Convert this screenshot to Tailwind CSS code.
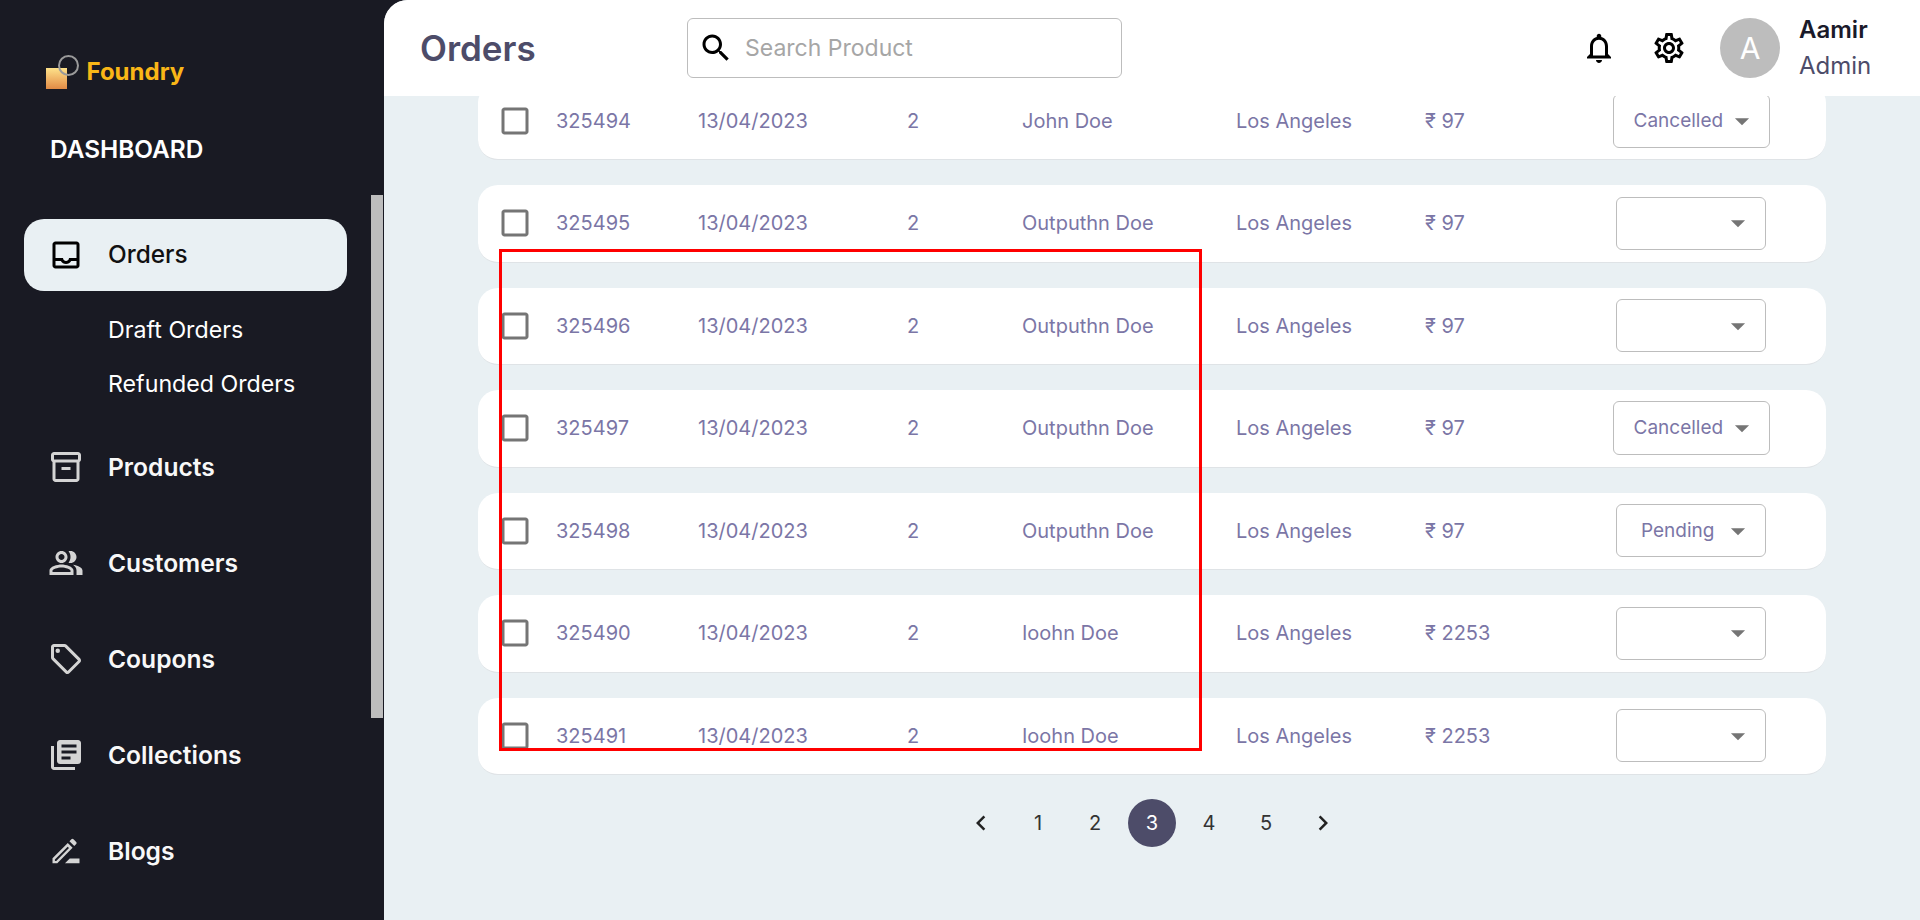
<!DOCTYPE html>
<html lang="en">
<head>
  <meta charset="UTF-8" />
  <title>Foundry - Orders</title>
  <script src="https://cdn.jsdelivr.net/npm/@tailwindcss/browser@4"></script>
</head>
<body class="h-screen overflow-hidden bg-[#191a23] [font-family:Inter,sans-serif]">
<div class="flex h-[920px] relative">

  <!-- sidebar -->
  <aside class="w-[384px] shrink-0 text-white">
    <div class="flex items-center h-[48px] mt-[48px] pl-[46px]">
      <span class="relative block w-[41px] h-[36px] mt-[2px]">
        <span class="absolute left-0 top-[13px] w-[21px] h-[21px] bg-gradient-to-b from-[#fde28a] to-[#e08a45]"></span>
        <span class="absolute left-[12px] top-0 w-[21px] h-[21px] rounded-full border-2 border-[#9a9a9a]"></span>
      </span>
      <span class="text-[24px] font-bold text-[#f9b617] -ml-[0.5px]">Foundry</span>
    </div>
    <div class="pl-[50px] mt-[38px] text-[24.4px] leading-[30px] font-semibold">DASHBOARD</div>

    <a class="flex items-center mt-[55px] ml-[24px] w-[323px] h-[72px] pl-[25px] rounded-[20px] bg-[#e9f0f3] text-[#111] text-[24.4px] font-medium">
      <svg class="w-[36px] h-[36px] fill-black -ml-[1px]" viewBox="0 0 24 24"><path d="M19 3H5c-1.1 0-2 .9-2 2v14c0 1.1.9 2 2 2h14c1.1 0 2-.9 2-2V5c0-1.1-.9-2-2-2zm0 16H5v-3h3.56c.69 1.19 1.97 2 3.45 2s2.75-.81 3.45-2H19v3zm0-5h-4.99c0 1.1-.9 2-2 2s-2-.9-2-2H5V5h14v9z"/></svg>
      <span class="ml-[24px] pb-[2px]">Orders</span>
    </a>
    <div class="pl-[108px] mt-[12px] text-[23.2px] leading-[54px] text-white">
      <div>Draft Orders</div>
      <div>Refunded Orders</div>
    </div>

    <nav class="mt-[32px] flex flex-col gap-[48px] pl-[48px] text-[24.6px] leading-[48px] font-semibold text-[#f8f8f8]">
      <a class="flex items-center h-[48px]">
        <svg class="w-[36px] h-[36px] fill-[#d4d4d4]" viewBox="0 0 24 24"><path d="M20 2H4c-1 0-2 .9-2 2v3.01c0 .72.43 1.34 1 1.69V20c0 1.1 1.1 2 2 2h14c.9 0 2-.9 2-2V8.7c.57-.35 1-.97 1-1.69V4c0-1.1-1-2-2-2zm-1 18H5V9h14v11zm1-13H4V4h16v3zM9 12h6v2H9z"/></svg>
        <span class="ml-[24px]">Products</span>
      </a>
      <a class="flex items-center h-[48px]">
        <svg class="w-[36px] h-[36px] fill-[#d4d4d4]" viewBox="0 0 24 24"><path d="M16.67 13.13C18.04 14.06 19 15.32 19 17v3h4v-3c0-2.18-3.57-3.47-6.33-3.87zM15 12c2.21 0 4-1.79 4-4s-1.79-4-4-4c-.47 0-.91.1-1.33.24C14.5 5.27 15 6.58 15 8s-.5 2.73-1.33 3.76c.42.14.86.24 1.33.24zM9 12c2.21 0 4-1.79 4-4s-1.79-4-4-4-4 1.79-4 4 1.79 4 4 4zm0-6c1.1 0 2 .9 2 2s-.9 2-2 2-2-.9-2-2 .9-2 2-2zM9 13c-2.67 0-8 1.34-8 4v3h16v-3c0-2.66-5.33-4-8-4zm6 5H3v-.99C3.2 16.29 6.3 15 9 15s5.8 1.29 6 2v1z"/></svg>
        <span class="ml-[24px]">Customers</span>
      </a>
      <a class="flex items-center h-[48px]">
        <svg class="w-[36px] h-[36px] fill-[#d4d4d4]" viewBox="0 0 24 24"><path d="M21.41 11.58l-9-9C12.05 2.22 11.55 2 11 2H4c-1.1 0-2 .9-2 2v7c0 .55.22 1.05.59 1.42l9 9c.36.36.86.58 1.41.58s1.05-.22 1.41-.59l7-7c.37-.36.59-.86.59-1.41s-.23-1.06-.59-1.42zM13 20.01 4 11V4h7v-.01l9 9-7 7.02z"/><circle cx="6.5" cy="6.5" r="1.5"/></svg>
        <span class="ml-[24px]">Coupons</span>
      </a>
      <a class="flex items-center h-[48px]">
        <svg class="w-[36px] h-[36px] fill-[#d4d4d4]" viewBox="0 0 24 24"><path d="M4 6H2v14c0 1.1.9 2 2 2h14v-2H4V6zm16-4H8c-1.1 0-2 .9-2 2v12c0 1.1.9 2 2 2h12c1.1 0 2-.9 2-2V4c0-1.1-.9-2-2-2zm-1 9H9V9h10v2zm-4 4H9v-2h6v2zm4-8H9V5h10v2z"/></svg>
        <span class="ml-[24px]">Collections</span>
      </a>
      <a class="flex items-center h-[48px]">
        <svg class="w-[36px] h-[36px] fill-[#d4d4d4]" viewBox="0 0 24 24"><path fill-rule="evenodd" d="M3 20.2v-3.4L13.2 6.6l3.2 3.2L6.2 20.2zM4.6 18.6h.9L14 10l-.9-.9-8.5 8.5zM14.3 5.5l1.3-1.3a1 1 0 0 1 1.4 0l1.8 1.8a1 1 0 0 1 0 1.4l-1.3 1.3zM11.3 20.2l3.2-3.2H21v3.2z"/></svg>
        <span class="ml-[24px]">Blogs</span>
      </a>
    </nav>
  </aside>

  <!-- sidebar scrollbar thumb -->
  <div class="absolute left-[371px] top-[195px] w-[12px] h-[523px] bg-[#bdbdbd]"></div>

  <!-- main -->
  <main class="flex-1 flex flex-col bg-[#e9f0f3] rounded-tl-3xl overflow-hidden">
    <header class="relative z-10 h-[96px] shrink-0 bg-white flex items-center pl-[36px]">
      <h1 class="w-[267px] text-[35px] font-semibold text-[#4d4c69]">Orders</h1>
      <div class="flex items-center w-[435px] h-[60px] pl-[10px] border border-[#bdbdbd] rounded-[6px]">
        <svg class="w-[36px] h-[36px] fill-black" viewBox="0 0 24 24"><path d="M15.5 14h-.79l-.28-.27C15.41 12.59 16 11.11 16 9.5 16 5.91 13.09 3 9.5 3S3 5.91 3 9.5 5.91 16 9.5 16c1.61 0 3.09-.59 4.23-1.57l.27.28v.79l5 4.99L20.49 19l-4.99-5zm-6 0C7.01 14 5 11.99 5 9.5S7.01 5 9.5 5 14 7.01 14 9.5 11.99 14 9.5 14z"/></svg>
        <span class="ml-[11px] text-[23px] text-[#a6a6a6]">Search Product</span>
      </div>
      <svg class="ml-[459px] w-[36px] h-[36px] fill-black" viewBox="0 0 24 24"><path d="M12 22c1.1 0 2-.9 2-2h-4c0 1.1.9 2 2 2zm6-6v-5c0-3.07-1.63-5.64-4.5-6.32V4c0-.83-.67-1.5-1.5-1.5s-1.5.67-1.5 1.5v.68C7.64 5.36 6 7.92 6 11v5l-2 2v1h16v-1l-2-2zm-2 1H8v-6c0-2.48 1.51-4.5 4-4.5s4 2.02 4 4.5v6z"/></svg>
      <svg class="ml-[34px] w-[36px] h-[36px] fill-black" viewBox="0 0 24 24"><path d="M19.43 12.98c.04-.32.07-.64.07-.98 0-.34-.03-.66-.07-.98l2.11-1.65c.19-.15.24-.42.12-.64l-2-3.46c-.09-.16-.26-.25-.44-.25-.06 0-.12.01-.17.03l-2.49 1c-.52-.4-1.08-.73-1.69-.98l-.38-2.65C14.46 2.18 14.25 2 14 2h-4c-.25 0-.46.18-.49.42l-.38 2.65c-.61.25-1.17.59-1.69.98l-2.49-1c-.06-.02-.12-.03-.18-.03-.17 0-.34.09-.43.25l-2 3.46c-.13.22-.07.49.12.64l2.11 1.65c-.04.32-.07.65-.07.98 0 .33.03.66.07.98l-2.11 1.65c-.19.15-.24.42-.12.64l2 3.46c.09.16.26.25.44.25.06 0 .12-.01.17-.03l2.49-1c.52.4 1.08.73 1.69.98l.38 2.65c.03.24.24.42.49.42h4c.25 0 .46-.18.49-.42l.38-2.65c.61-.25 1.17-.59 1.69-.98l2.49 1c.06.02.12.03.18.03.17 0 .34-.09.43-.25l2-3.46c.12-.22.07-.49-.12-.64l-2.11-1.65zm-1.98-1.71c.04.31.05.52.05.73 0 .21-.02.43-.05.73l-.14 1.13.89.7 1.08.84-.7 1.21-1.27-.51-1.04-.42-.9.68c-.43.32-.84.56-1.25.73l-1.06.43-.16 1.13-.2 1.35h-1.4l-.19-1.35-.16-1.13-1.06-.43c-.43-.18-.83-.41-1.23-.71l-.91-.7-1.06.43-1.27.51-.7-1.21 1.08-.84.89-.7-.14-1.13c-.03-.31-.05-.54-.05-.74s.02-.43.05-.73l.14-1.13-.89-.7-1.08-.84.7-1.21 1.27.51 1.04.42.9-.68c.43-.32.84-.56 1.25-.73l1.06-.43.16-1.13.2-1.35h1.39l.19 1.35.16 1.13 1.06.43c.43.18.83.41 1.23.71l.91.7 1.06-.43 1.27-.51.7 1.21-1.07.85-.89.7.14 1.13zM12 8c-2.21 0-4 1.79-4 4s1.79 4 4 4 4-1.79 4-4-1.79-4-4-4zm0 6c-1.1 0-2-.9-2-2s.9-2 2-2 2 .9 2 2-.9 2-2 2z"/></svg>
      <div class="ml-[33px] w-[60px] h-[60px] rounded-full bg-[#bdbdbd] flex items-center justify-center text-white text-[30px]">A</div>
      <div class="ml-[19px] text-[24px] leading-[36px]">
        <div class="font-semibold text-[#1a1a2a]">Aamir</div>
        <div class="text-[#4d4c69]">Admin</div>
      </div>
    </header>

    <section class="-mt-[13.5px] pl-[94px] w-[1442px] flex flex-col gap-[25px] text-[20px] text-[#7b76a6]">
      <!-- rows -->
      <div class="flex items-center h-[77.5px] pl-[19px] bg-white rounded-[20px] border-b border-[#dfe3e6]">
        <svg class="w-[36px] h-[36px] fill-[#757575]" viewBox="0 0 24 24"><path d="M19 5v14H5V5h14m0-2H5c-1.1 0-2 .9-2 2v14c0 1.1.9 2 2 2h14c1.1 0 2-.9 2-2V5c0-1.1-.9-2-2-2z"/></svg>
        <span class="ml-[23px] w-[142px]">325494</span><span class="w-[209px]">13/04/2023</span><span class="w-[115px]">2</span><span class="w-[214px]">John Doe</span><span class="w-[189px]">Los Angeles</span><span class="w-[150px]">₹ 97</span>
        <div class="w-[232px] flex justify-center">
          <div class="flex items-center justify-between w-[157px] h-[54px] pl-[20px] pr-[14px] border border-[#bdbdbd] rounded-[6px] text-[19px]">Cancelled<svg class="w-[34px] h-[34px] -mr-[4px] fill-[#757575]" viewBox="0 0 24 24"><path d="M7 10l5 5 5-5z"/></svg></div>
        </div>
      </div>
      <div class="flex items-center h-[77.5px] pl-[19px] bg-white rounded-[20px] border-b border-[#dfe3e6]">
        <svg class="w-[36px] h-[36px] fill-[#757575]" viewBox="0 0 24 24"><path d="M19 5v14H5V5h14m0-2H5c-1.1 0-2 .9-2 2v14c0 1.1.9 2 2 2h14c1.1 0 2-.9 2-2V5c0-1.1-.9-2-2-2z"/></svg>
        <span class="ml-[23px] w-[142px]">325495</span><span class="w-[209px]">13/04/2023</span><span class="w-[115px]">2</span><span class="w-[214px]">Outputhn Doe</span><span class="w-[189px]">Los Angeles</span><span class="w-[150px]">₹ 97</span>
        <div class="w-[232px] flex justify-center">
          <div class="flex items-center justify-end w-[150px] h-[53px] pr-[10px] border border-[#bdbdbd] rounded-[6px]"><svg class="w-[34px] h-[34px] fill-[#757575]" viewBox="0 0 24 24"><path d="M7 10l5 5 5-5z"/></svg></div>
        </div>
      </div>
      <div class="flex items-center h-[77.5px] pl-[19px] bg-white rounded-[20px] border-b border-[#dfe3e6]">
        <svg class="w-[36px] h-[36px] fill-[#757575]" viewBox="0 0 24 24"><path d="M19 5v14H5V5h14m0-2H5c-1.1 0-2 .9-2 2v14c0 1.1.9 2 2 2h14c1.1 0 2-.9 2-2V5c0-1.1-.9-2-2-2z"/></svg>
        <span class="ml-[23px] w-[142px]">325496</span><span class="w-[209px]">13/04/2023</span><span class="w-[115px]">2</span><span class="w-[214px]">Outputhn Doe</span><span class="w-[189px]">Los Angeles</span><span class="w-[150px]">₹ 97</span>
        <div class="w-[232px] flex justify-center">
          <div class="flex items-center justify-end w-[150px] h-[53px] pr-[10px] border border-[#bdbdbd] rounded-[6px]"><svg class="w-[34px] h-[34px] fill-[#757575]" viewBox="0 0 24 24"><path d="M7 10l5 5 5-5z"/></svg></div>
        </div>
      </div>
      <div class="flex items-center h-[77.5px] pl-[19px] bg-white rounded-[20px] border-b border-[#dfe3e6]">
        <svg class="w-[36px] h-[36px] fill-[#757575]" viewBox="0 0 24 24"><path d="M19 5v14H5V5h14m0-2H5c-1.1 0-2 .9-2 2v14c0 1.1.9 2 2 2h14c1.1 0 2-.9 2-2V5c0-1.1-.9-2-2-2z"/></svg>
        <span class="ml-[23px] w-[142px]">325497</span><span class="w-[209px]">13/04/2023</span><span class="w-[115px]">2</span><span class="w-[214px]">Outputhn Doe</span><span class="w-[189px]">Los Angeles</span><span class="w-[150px]">₹ 97</span>
        <div class="w-[232px] flex justify-center">
          <div class="flex items-center justify-between w-[157px] h-[54px] pl-[20px] pr-[14px] border border-[#bdbdbd] rounded-[6px] text-[19px]">Cancelled<svg class="w-[34px] h-[34px] -mr-[4px] fill-[#757575]" viewBox="0 0 24 24"><path d="M7 10l5 5 5-5z"/></svg></div>
        </div>
      </div>
      <div class="flex items-center h-[77.5px] pl-[19px] bg-white rounded-[20px] border-b border-[#dfe3e6]">
        <svg class="w-[36px] h-[36px] fill-[#757575]" viewBox="0 0 24 24"><path d="M19 5v14H5V5h14m0-2H5c-1.1 0-2 .9-2 2v14c0 1.1.9 2 2 2h14c1.1 0 2-.9 2-2V5c0-1.1-.9-2-2-2z"/></svg>
        <span class="ml-[23px] w-[142px]">325498</span><span class="w-[209px]">13/04/2023</span><span class="w-[115px]">2</span><span class="w-[214px]">Outputhn Doe</span><span class="w-[189px]">Los Angeles</span><span class="w-[150px]">₹ 97</span>
        <div class="w-[232px] flex justify-center">
          <div class="flex items-center justify-between w-[150px] h-[53px] pl-[24px] pr-[10px] border border-[#bdbdbd] rounded-[6px] text-[19px]">Pending<svg class="w-[34px] h-[34px] fill-[#757575]" viewBox="0 0 24 24"><path d="M7 10l5 5 5-5z"/></svg></div>
        </div>
      </div>
      <div class="flex items-center h-[77.5px] pl-[19px] bg-white rounded-[20px] border-b border-[#dfe3e6]">
        <svg class="w-[36px] h-[36px] fill-[#757575]" viewBox="0 0 24 24"><path d="M19 5v14H5V5h14m0-2H5c-1.1 0-2 .9-2 2v14c0 1.1.9 2 2 2h14c1.1 0 2-.9 2-2V5c0-1.1-.9-2-2-2z"/></svg>
        <span class="ml-[23px] w-[142px]">325490</span><span class="w-[209px]">13/04/2023</span><span class="w-[115px]">2</span><span class="w-[214px]">Ioohn Doe</span><span class="w-[189px]">Los Angeles</span><span class="w-[150px]">₹ 2253</span>
        <div class="w-[232px] flex justify-center">
          <div class="flex items-center justify-end w-[150px] h-[53px] pr-[10px] border border-[#bdbdbd] rounded-[6px]"><svg class="w-[34px] h-[34px] fill-[#757575]" viewBox="0 0 24 24"><path d="M7 10l5 5 5-5z"/></svg></div>
        </div>
      </div>
      <div class="flex items-center h-[77.5px] pl-[19px] bg-white rounded-[20px] border-b border-[#dfe3e6]">
        <svg class="w-[36px] h-[36px] fill-[#757575]" viewBox="0 0 24 24"><path d="M19 5v14H5V5h14m0-2H5c-1.1 0-2 .9-2 2v14c0 1.1.9 2 2 2h14c1.1 0 2-.9 2-2V5c0-1.1-.9-2-2-2z"/></svg>
        <span class="ml-[23px] w-[142px]">325491</span><span class="w-[209px]">13/04/2023</span><span class="w-[115px]">2</span><span class="w-[214px]">Ioohn Doe</span><span class="w-[189px]">Los Angeles</span><span class="w-[150px]">₹ 2253</span>
        <div class="w-[232px] flex justify-center">
          <div class="flex items-center justify-end w-[150px] h-[53px] pr-[10px] border border-[#bdbdbd] rounded-[6px]"><svg class="w-[34px] h-[34px] fill-[#757575]" viewBox="0 0 24 24"><path d="M7 10l5 5 5-5z"/></svg></div>
        </div>
      </div>

      <!-- pagination -->
      <div class="-mt-[1.5px] flex items-center justify-center gap-[9px] text-[20px] text-[#333]">
        <span class="w-[48px] h-[48px] flex items-center justify-center"><svg class="w-[30px] h-[30px] fill-[#222]" viewBox="0 0 24 24"><path d="M15.41 7.41 14 6l-6 6 6 6 1.41-1.41L10.83 12z"/></svg></span>
        <span class="w-[48px] h-[48px] flex items-center justify-center">1</span>
        <span class="w-[48px] h-[48px] flex items-center justify-center">2</span>
        <span class="w-[48px] h-[48px] flex items-center justify-center rounded-full bg-[#4d4c69] text-white">3</span>
        <span class="w-[48px] h-[48px] flex items-center justify-center">4</span>
        <span class="w-[48px] h-[48px] flex items-center justify-center">5</span>
        <span class="w-[48px] h-[48px] flex items-center justify-center"><svg class="w-[30px] h-[30px] fill-[#222]" viewBox="0 0 24 24"><path d="M8.59 16.59 10 18l6-6-6-6-1.41 1.41L13.17 12z"/></svg></span>
      </div>
    </section>
  </main>

  <!-- red annotation box -->
  <div class="absolute left-[499px] top-[249px] w-[703px] h-[502px] border-[3px] border-[#f00] z-20"></div>
</div>
</body>
</html>
